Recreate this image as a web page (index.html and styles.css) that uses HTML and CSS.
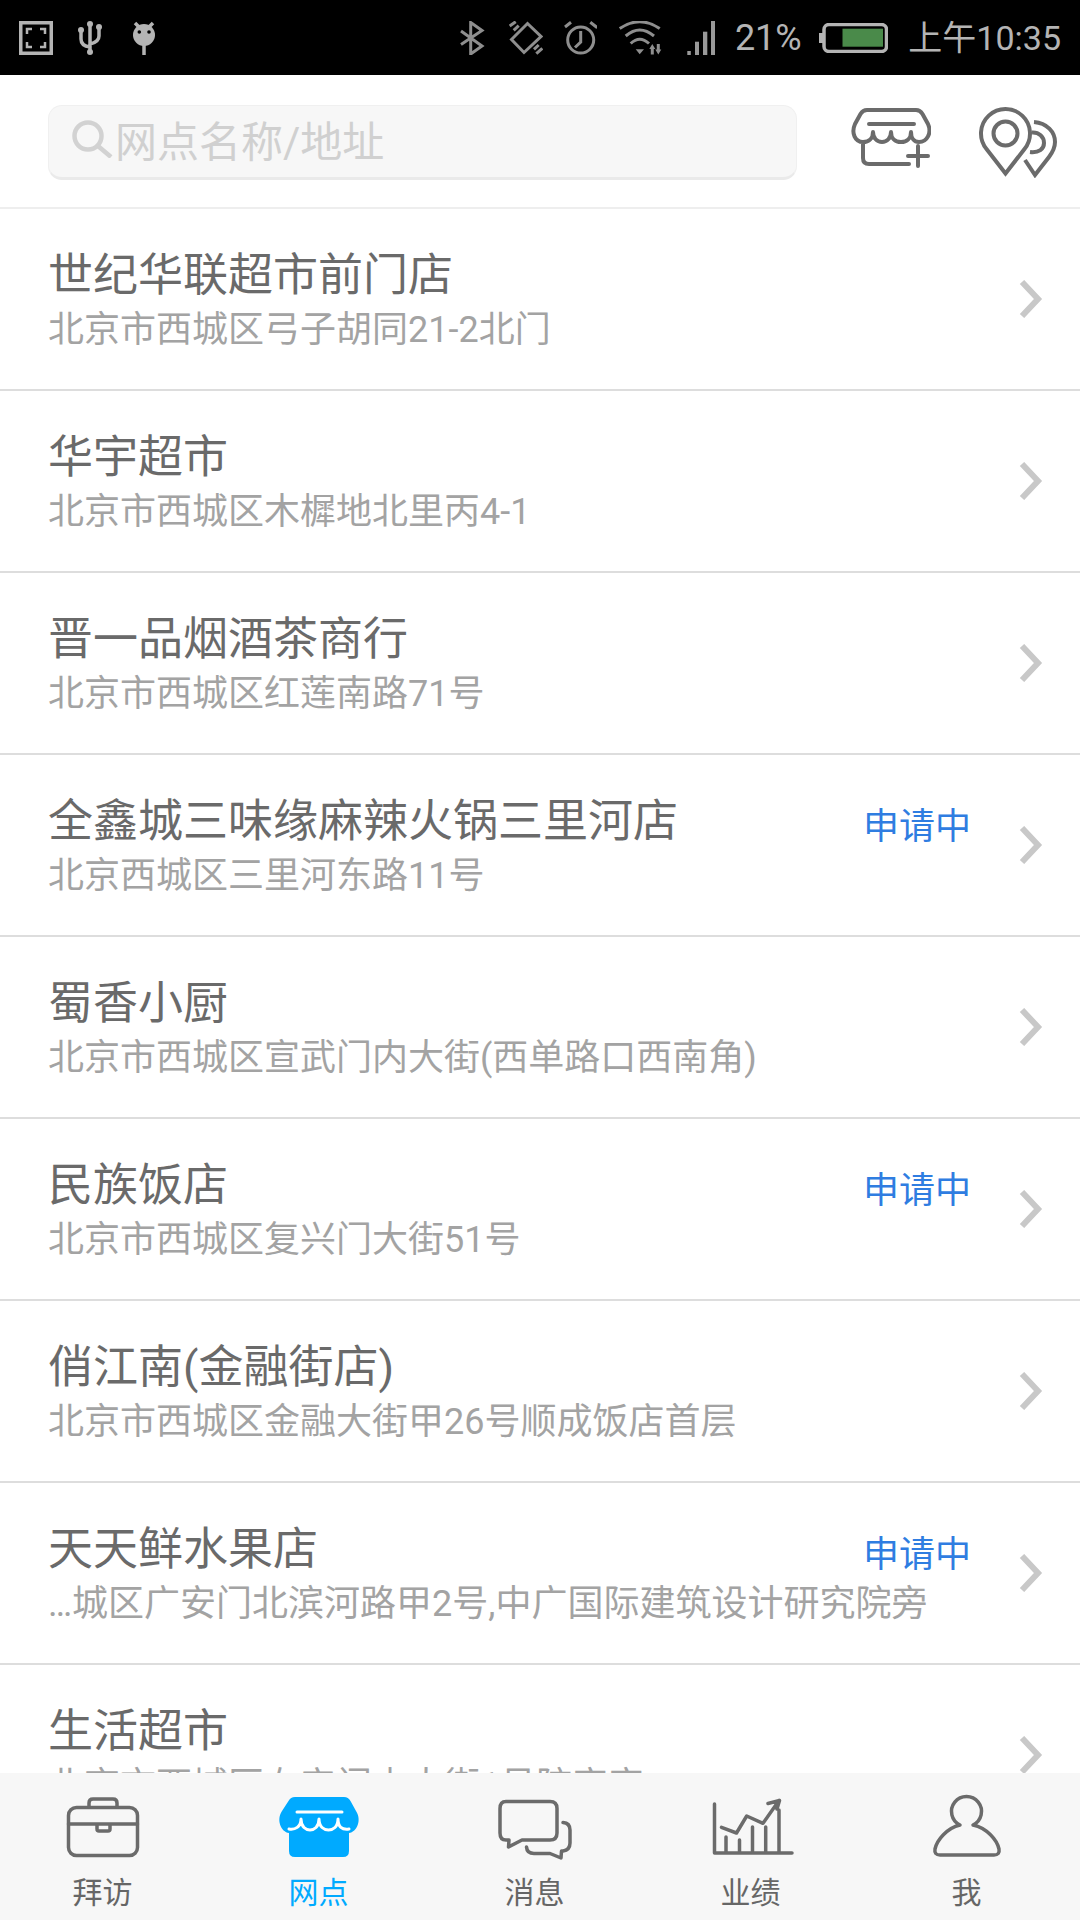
FILE: index.html
```html
<!DOCTYPE html>
<html lang="zh-CN">
<head>
    <meta charset="UTF-8">
    <meta name="viewport" content="width=device-width, initial-scale=1.0">
    <title>网点</title>
    <link rel="stylesheet" href="styles.css">
</head>
<body>
<div class="app">

    <div class="status-bar">
        <div class="status-left">
            <svg class="st-icon" viewBox="0 0 34 34"><rect x="1.75" y="1.75" width="30.5" height="30.5" class="st-line"/><path d="M8 13V8h5M21 8h5v5M8 21v5h5M26 21v5h-5" class="st-line thin"/></svg>
            <svg class="st-icon" viewBox="0 0 34 34"><path d="M17 2V32M8 9v9q0 7 9 8M26 6v9q0 6-9 8" class="st-line"/><circle cx="17" cy="3" r="3" class="st-fill"/><circle cx="17" cy="31" r="3" class="st-fill"/><circle cx="8" cy="9" r="3" class="st-fill"/><circle cx="26" cy="6" r="3" class="st-fill"/></svg>
            <svg class="st-icon" viewBox="0 0 34 34"><path d="M8 2l5 5M26 2l-5 5M17 24v10" class="st-line"/><circle cx="17" cy="14" r="11" class="st-fill"/><circle cx="12.3" cy="11" r="1.8" fill="#000"/><circle cx="22" cy="11" r="1.8" fill="#000"/></svg>
        </div>
        <div class="status-right">
            <svg class="st-icon dim" viewBox="0 0 34 34"><path d="M7 10l21 15-11.300 8V1.500L28 9.500 7 23.500" class="st-line"/></svg>
            <svg class="st-icon wide dim" viewBox="0 0 35 34"><path d="M19.500 2.500L33 15.500 16 31.500 3.500 18.500zM1.700 5l6-4.300M5.700 9.300l5-4.600M26 28.300l4.700-4.300M28.300 32.700l6-5.400" class="st-line"/></svg>
            <svg class="st-icon dim" viewBox="0 0 34 34"><circle cx="17.700" cy="19" r="13" class="st-line"/><path d="M17.700 10v11L12 26.500M2 6l6-4.700M27.300 1.300l7 5.400" class="st-line"/></svg>
            <svg class="st-wifi dim" viewBox="0 0 48 34"><path d="M2.700 7.500Q22.700-6 42.700 7.500M8.700 15Q22.700 3 37 15M13.700 22.500Q22.700 14 32 22.500" class="st-line"/><path d="M18.700 28.300H27l-4.300 5zM35.300 23l3 5h-6zM41.300 33.500l3-5h-6z" class="st-fill"/><path d="M35.300 27v6.500M41.300 23v6" class="st-line thin"/></svg>
            <svg class="st-signal dim" viewBox="0 0 30 34"><rect x="2.300" y="30" width="3.500" height="4"/><rect x="10" y="20.700" width="4" height="13.300"/><rect x="18" y="10.700" width="4.300" height="23.300"/><rect x="26" y="0" width="4" height="34"/></svg>
            <span class="st-text st-pct">21%</span>
            <svg class="st-battery" viewBox="0 0 69 30"><rect x="0" y="10" width="4" height="10" class="st-fill"/><rect x="5" y="1.500" width="62.500" height="27" rx="5" class="st-line"/><rect x="23.500" y="5.700" width="40.500" height="18" fill="#4a8a4a"/></svg>
            <span class="st-text">上午10:35</span>
        </div>
    </div>

    <div class="top-bar">
        <div class="search-box">
            <svg class="search-icon" viewBox="0 0 42 38"><circle cx="17" cy="16" r="13.500"/><path d="M27 26l13 11"/></svg>
            <span class="search-text">网点名称/地址</span>
        </div>
        <svg class="store-add" viewBox="0 0 80 62"><path d="M16 3H65C68 3 70 4.500 71.500 7L77 17C81 26 76 35 68 35C63 35 60 31 60 25C60 31 56 35 50 35C44 35 40 31 40 25C40 31 36 35 31 35C26 35 22 31 22 25C22 31 18 35 12 35C4 35 0 26 4 17L9.500 7C11 4.500 13 3 16 3ZM18 17H63M12 37V51Q12 57 18 57H58M57 49H77M67 39V59"/></svg>
        <svg class="pin-pair" viewBox="0 0 82 73"><path d="M28.500 68.500L9.500 44A24.500 24.500 0 1 1 47.500 44Z"/><circle cx="28.500" cy="28.500" r="12"/><path d="M57 17C70 18 78 27 78 37C78 43 75 48 72 52L58 70L48 55M55 27.500C62 27 67 32 67 38C67 44 62 48 53 47"/></svg>
    </div>

    <ul class="shop-list">
        <li class="shop">
            <div class="shop-info"><div class="shop-name">世纪华联超市前门店</div><div class="shop-addr">北京市西城区弓子胡同21-2北门</div></div>
            <svg class="arrow" viewBox="0 0 24 38"><path d="M3 2L19 19L3 36"/></svg>
        </li>
        <li class="shop">
            <div class="shop-info"><div class="shop-name">华宇超市</div><div class="shop-addr">北京市西城区木樨地北里丙4-1</div></div>
            <svg class="arrow" viewBox="0 0 24 38"><path d="M3 2L19 19L3 36"/></svg>
        </li>
        <li class="shop">
            <div class="shop-info"><div class="shop-name">晋一品烟酒茶商行</div><div class="shop-addr">北京市西城区红莲南路71号</div></div>
            <svg class="arrow" viewBox="0 0 24 38"><path d="M3 2L19 19L3 36"/></svg>
        </li>
        <li class="shop">
            <div class="shop-info"><div class="shop-name">全鑫城三味缘麻辣火锅三里河店</div><div class="shop-addr">北京西城区三里河东路11号</div></div>
            <span class="shop-tag">申请中</span>
            <svg class="arrow" viewBox="0 0 24 38"><path d="M3 2L19 19L3 36"/></svg>
        </li>
        <li class="shop">
            <div class="shop-info"><div class="shop-name">蜀香小厨</div><div class="shop-addr">北京市西城区宣武门内大街(西单路口西南角)</div></div>
            <svg class="arrow" viewBox="0 0 24 38"><path d="M3 2L19 19L3 36"/></svg>
        </li>
        <li class="shop">
            <div class="shop-info"><div class="shop-name">民族饭店</div><div class="shop-addr">北京市西城区复兴门大街51号</div></div>
            <span class="shop-tag">申请中</span>
            <svg class="arrow" viewBox="0 0 24 38"><path d="M3 2L19 19L3 36"/></svg>
        </li>
        <li class="shop">
            <div class="shop-info"><div class="shop-name">俏江南(金融街店)</div><div class="shop-addr">北京市西城区金融大街甲26号顺成饭店首层</div></div>
            <svg class="arrow" viewBox="0 0 24 38"><path d="M3 2L19 19L3 36"/></svg>
        </li>
        <li class="shop">
            <div class="shop-info"><div class="shop-name">天天鲜水果店</div><div class="shop-addr">…城区广安门北滨河路甲2号,中广国际建筑设计研究院旁</div></div>
            <span class="shop-tag">申请中</span>
            <svg class="arrow" viewBox="0 0 24 38"><path d="M3 2L19 19L3 36"/></svg>
        </li>
        <li class="shop">
            <div class="shop-info"><div class="shop-name">生活超市</div><div class="shop-addr">北京市西城区右安门内大街1号院旁旁</div></div>
            <svg class="arrow" viewBox="0 0 24 38"><path d="M3 2L19 19L3 36"/></svg>
        </li>
    </ul>

    <div class="tab-bar">
        <div class="tab">
            <svg class="tab-icon" viewBox="0 0 80 64"><rect x="5.500" y="12.500" width="69" height="48" rx="8"/><path d="M26 12V8q0-4 4-4h20q4 0 4 4v4M5.500 29h69M34 29v5q0 2 2 2h9q2 0 2-2v-5"/></svg>
            <span>拜访</span>
        </div>
        <div class="tab active">
            <svg class="tab-icon" viewBox="0 0 80 64"><path class="solid" d="M16 2H65C68 2 70 3.500 71.500 6L77 16C83 25 78 37 70 38V56Q70 62 64 62H16Q10 62 10 56V38C2 37 -3 25 3 16L9.500 6C11 3.500 13 2 16 2Z"/><path class="cut" d="M18 17H63M10 34C16 35 22 32 22 24C22 32 27 35 31 35S40 32 40 24C40 32 45 35 49.500 35S59 32 59 24C59 32 63 35 70 34"/></svg>
            <span>网点</span>
        </div>
        <div class="tab">
            <svg class="tab-icon" viewBox="0 0 80 64"><path d="M11 6.500H55Q62 6.500 62 13.500V38Q62 45 55 45H27L13.500 52L14 45H11Q5 45 5 38V13.500Q5 6.500 11 6.500Z"/><path d="M68 27.500Q75 28 75 35V48Q75 55 68 56H66.500L66 63L55 58.500H39Q32 58.500 31.500 52"/></svg>
            <span>消息</span>
        </div>
        <div class="tab">
            <svg class="tab-icon" viewBox="0 0 80 64"><path d="M3.500 9V58H81M15 42V58M28.500 45V58M41.500 32V58M54.700 32V58M68 15V58M10.500 32.300L25.500 38L35.700 21L52 28.300L68 5.500M57 8.500L68.500 5.500L66 14"/></svg>
            <span>业绩</span>
        </div>
        <div class="tab">
            <svg class="tab-icon" viewBox="0 0 80 64"><path d="M33 30A15 15 0 1 1 46 30C60 33 70 45 72 54Q73 60 67 60H13Q7 60 8 54C10 45 20 33 33 30Z"/></svg>
            <span>我</span>
        </div>
    </div>

</div>
</body>
</html>
```

FILE: styles.css
```css
* {
    box-sizing: border-box;
}
body {
    margin: 0;
    font-family: Roboto, "Noto Sans CJK SC", sans-serif;
    background-color: #fff;
}
.app {
    width: 1080px;
    height: 1920px;
    display: flex;
    flex-direction: column;
    overflow: hidden;
}

/* status bar */
.status-bar {
    height: 75px;
    flex-shrink: 0;
    background-color: #000;
    display: flex;
    justify-content: space-between;
    align-items: center;
    padding: 0 19px;
}
.status-left, .status-right {
    display: flex;
    align-items: center;
    gap: 20px;
}
.st-icon {
    width: 34px;
    height: 34px;
}
.st-icon.wide {
    width: 35px;
}
.st-wifi {
    width: 48px;
    height: 34px;
}
.st-signal {
    width: 30px;
    height: 34px;
    fill: #999;
}
.st-battery {
    width: 69px;
    height: 30px;
}
.st-line {
    fill: none;
    stroke: #b4b4b4;
    stroke-width: 3.5;
}
.st-line.thin {
    stroke-width: 2.500;
}
.st-fill {
    fill: #b4b4b4;
}
.dim .st-line {
    stroke: #8e8e8e;
    stroke-width: 3;
}
.dim .st-fill {
    fill: #8e8e8e;
}
.st-text {
    font-size: 34px;
    line-height: 40px;
    color: #b4b4b4;
}
.st-pct {
    font-size: 36px;
    margin-left: -0.6px;
    margin-right: -2.4px;
}

/* search row */
.top-bar {
    height: 134px;
    flex-shrink: 0;
    display: flex;
    align-items: center;
    padding: 2px 0 0 48px;
    border-bottom: 2px solid #eee;
}
.search-box {
    width: 749px;
    height: 75px;
    display: flex;
    align-items: center;
    gap: 2px;
    padding: 0 0 5px 22px;
    background-color: #f7f7f7;
    border: 1px solid #f0f0f0;
    border-bottom: 3px solid #eaeaea;
    border-radius: 14px;
}
.search-icon {
    width: 42px;
    height: 38px;
    fill: none;
    stroke: #d2d2d2;
    stroke-width: 4.500;
}
.search-text {
    font-size: 42px;
    color: #d0d0d0;
}
.store-add {
    width: 80px;
    height: 62px;
    margin-left: 54px;
    margin-bottom: 9px;
    fill: none;
    stroke: #6b6b6b;
    stroke-width: 4;
    stroke-linecap: round;
    stroke-linejoin: round;
}
.pin-pair {
    width: 82px;
    height: 73px;
    margin-left: 46px;
    margin-bottom: 1px;
    fill: none;
    stroke: #6b6b6b;
    stroke-width: 4;
}

/* list */
.shop-list {
    flex: 1;
    min-height: 0;
    margin: 0;
    padding: 0;
    list-style: none;
    overflow: hidden;
}
.shop {
    height: 182px;
    display: flex;
    align-items: center;
    padding-left: 48px;
    padding-right: 37px;
    border-bottom: 2px solid #ddd;
}
.shop-info {
    flex: 1;
    min-width: 0;
    padding-top: 7px;
}
.shop-name {
    font-size: 45px;
    line-height: 56px;
    color: #6a6a6a;
}
.shop-addr {
    font-size: 36px;
    line-height: 53px;
    color: #a3a3a3;
    white-space: nowrap;
}
.shop-tag {
    font-size: 36px;
    color: #2f7de1;
    margin-right: 48px;
    margin-bottom: 45px;
}
.arrow {
    width: 24px;
    height: 38px;
    flex-shrink: 0;
    fill: none;
    stroke: #c8c8c8;
    stroke-width: 6;
}

/* bottom tabs */
.tab-bar {
    height: 147px;
    flex-shrink: 0;
    display: flex;
    gap: 43px;
    padding: 22px 0 0 16px;
    background-color: #f7f7f7;
}
.tab {
    width: 173px;
    display: flex;
    flex-direction: column;
    align-items: center;
    font-size: 30px;
    line-height: 40px;
    color: #666;
}
.tab-icon {
    width: 80px;
    height: 64px;
    margin-bottom: 14px;
    overflow: visible;
    fill: none;
    stroke: #6b6b6b;
    stroke-width: 3.500;
    stroke-linecap: round;
    stroke-linejoin: round;
}
.tab.active {
    color: #00aaff;
}
.tab-icon .solid {
    fill: #00aaff;
    stroke: none;
}
.tab-icon .cut {
    stroke: #fff;
    stroke-width: 3;
}
```
